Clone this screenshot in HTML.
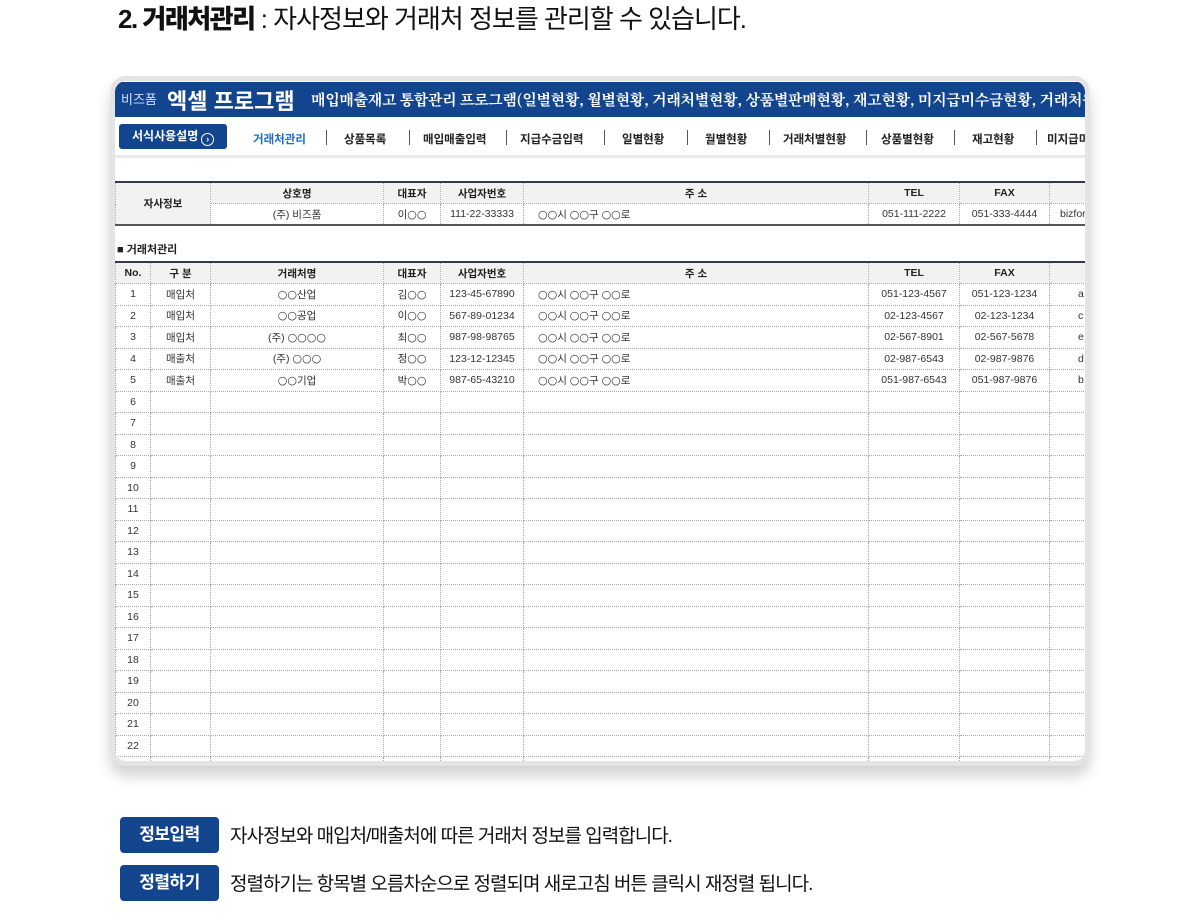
<!DOCTYPE html>
<html><head><meta charset="utf-8"><style>
*{margin:0;padding:0;box-sizing:border-box}
body{width:1200px;height:920px;background:#fff;font-family:"Liberation Sans","Noto Sans CJK KR",sans-serif;position:relative;overflow:hidden;color:#222}
.title{position:absolute;left:118px;top:-1px;font-size:26px;letter-spacing:-1px;color:#111;white-space:nowrap}
.title b{font-weight:900;letter-spacing:-1.5px}
.card{position:absolute;left:110px;top:76px;width:980px;height:690px;border:5px solid #e4e4e4;border-radius:16px;overflow:hidden;background:#fff;box-shadow:0 10px 14px rgba(0,0,0,.18)}
.hdr{position:absolute;left:0;top:1px;width:975px;height:35px;background:#13458f;color:#fff;white-space:nowrap}
.hdr .l{position:absolute;left:6px;top:7px;font-size:13px;color:#cfe0ff}
.hdr .b{position:absolute;left:52px;top:2px;font-size:22px;font-weight:bold}
.hdr .s{position:absolute;left:196px;top:7px;font-size:15px;font-family:"Noto Serif CJK SC","Noto Sans CJK KR",sans-serif;font-weight:bold;letter-spacing:-.3px}
.nav{position:absolute;left:0;top:38px;width:975px;height:39px;border-bottom:3px solid #eaeaea;white-space:nowrap}
.btn{position:absolute;left:4px;top:5px;width:108px;height:25px;background:#13458f;border-radius:3px;color:#fff;font-size:12px;font-weight:bold;line-height:25px;padding-left:13px}
.btn span{display:inline-block;width:13px;height:13px;border:1.5px solid #fff;border-radius:50%;font-size:9px;line-height:10px;text-align:center;vertical-align:-2px;margin-left:3px}
.nav .it{position:absolute;top:12px;font-size:11.5px;font-weight:bold;color:#222}
.nav .sep{position:absolute;top:11px;width:1px;height:15px;background:#555}
table{position:absolute;left:0;border-collapse:collapse;font-size:10.5px;table-layout:fixed}
td{border:1px dotted #aaa;text-align:center;height:21.5px;white-space:nowrap;overflow:hidden;color:#333}
.o{font-family:"DejaVu Sans",sans-serif;font-size:11px}
tr.h td{background:#f2f2f2;font-weight:bold;color:#222}
table.t{border-top:2px solid #333a4a;border-bottom:2px solid #555}
.sec{position:absolute;left:2px;top:160px;font-size:11px;font-weight:bold}
.badge{position:absolute;left:120px;width:99px;height:36px;background:#13458f;color:#fff;border-radius:4px;font-size:17px;font-weight:bold;text-align:center;line-height:36px;letter-spacing:-.5px}
.desc{position:absolute;left:230px;font-size:19px;letter-spacing:-1px;color:#111;white-space:nowrap}
</style></head><body>
<div class="title"><b>2. 거래처관리</b> : 자사정보와 거래처 정보를 관리할 수 있습니다.</div>
<div class="card">
 <div class="hdr"><span class="l">비즈폼</span><span class="b">엑셀 프로그램</span><span class="s">매입매출재고 통합관리 프로그램(일별현황, 월별현황, 거래처별현황, 상품별판매현황, 재고현황, 미지급미수금현황, 거래처원장</span></div>
 <div class="nav"><div class="btn">서식사용설명<span>›</span></div>
  <span class="it" style="left:138px;color:#1a6fc0">거래처관리</span><span class="sep" style="left:211px"></span>
  <span class="it" style="left:229px">상품목록</span><span class="sep" style="left:294px"></span>
  <span class="it" style="left:308px">매입매출입력</span><span class="sep" style="left:391px"></span>
  <span class="it" style="left:405px">지급수금입력</span><span class="sep" style="left:489px"></span>
  <span class="it" style="left:507px">일별현황</span><span class="sep" style="left:572px"></span>
  <span class="it" style="left:590px">월별현황</span><span class="sep" style="left:654px"></span>
  <span class="it" style="left:668px">거래처별현황</span><span class="sep" style="left:751px"></span>
  <span class="it" style="left:766px">상품별현황</span><span class="sep" style="left:839px"></span>
  <span class="it" style="left:857px">재고현황</span><span class="sep" style="left:921px"></span>
  <span class="it" style="left:932px">미지급미</span></div>
 <table class="t" style="top:100px;width:1010px">
  <colgroup><col style="width:95px"><col style="width:173px"><col style="width:57px"><col style="width:83px"><col style="width:345px"><col style="width:91px"><col style="width:90px"><col style="width:76px"></colgroup>
  <tr class="h"><td rowspan="2" style="background:#f2f2f2">자사정보</td><td>상호명</td><td>대표자</td><td>사업자번호</td><td>주 소</td><td>TEL</td><td>FAX</td><td></td></tr>
  <tr><td>(주) 비즈폼</td><td>이<span class="o">○○</span></td><td>111-22-33333</td><td style="text-align:left;padding-left:14px"><span class="o">○○</span>시 <span class="o">○○</span>구 <span class="o">○○</span>로</td><td>051-111-2222</td><td>051-333-4444</td><td style="text-align:left;padding-left:10px">bizform</td></tr>
 </table>
 <div class="sec">■ 거래처관리</div>
 <table class="t" style="top:180px;width:1010px;border-bottom:none">
  <colgroup><col style="width:35px"><col style="width:60px"><col style="width:173px"><col style="width:57px"><col style="width:83px"><col style="width:345px"><col style="width:91px"><col style="width:90px"><col style="width:76px"></colgroup>
  <tr class="h"><td>No.</td><td>구 분</td><td>거래처명</td><td>대표자</td><td>사업자번호</td><td>주 소</td><td>TEL</td><td>FAX</td><td></td></tr>
  <tr><td>1</td><td>매입처</td><td><span class="o">○○</span>산업</td><td>김<span class="o">○○</span></td><td>123-45-67890</td><td style="text-align:left;padding-left:14px"><span class="o">○○</span>시 <span class="o">○○</span>구 <span class="o">○○</span>로</td><td>051-123-4567</td><td>051-123-1234</td><td style="text-align:left;padding-left:28px">a</td></tr>
  <tr><td>2</td><td>매입처</td><td><span class="o">○○</span>공업</td><td>이<span class="o">○○</span></td><td>567-89-01234</td><td style="text-align:left;padding-left:14px"><span class="o">○○</span>시 <span class="o">○○</span>구 <span class="o">○○</span>로</td><td>02-123-4567</td><td>02-123-1234</td><td style="text-align:left;padding-left:28px">c</td></tr>
  <tr><td>3</td><td>매입처</td><td>(주) <span class="o">○○○○</span></td><td>최<span class="o">○○</span></td><td>987-98-98765</td><td style="text-align:left;padding-left:14px"><span class="o">○○</span>시 <span class="o">○○</span>구 <span class="o">○○</span>로</td><td>02-567-8901</td><td>02-567-5678</td><td style="text-align:left;padding-left:28px">e</td></tr>
  <tr><td>4</td><td>매출처</td><td>(주) <span class="o">○○○</span></td><td>정<span class="o">○○</span></td><td>123-12-12345</td><td style="text-align:left;padding-left:14px"><span class="o">○○</span>시 <span class="o">○○</span>구 <span class="o">○○</span>로</td><td>02-987-6543</td><td>02-987-9876</td><td style="text-align:left;padding-left:28px">d</td></tr>
  <tr><td>5</td><td>매출처</td><td><span class="o">○○</span>기업</td><td>박<span class="o">○○</span></td><td>987-65-43210</td><td style="text-align:left;padding-left:14px"><span class="o">○○</span>시 <span class="o">○○</span>구 <span class="o">○○</span>로</td><td>051-987-6543</td><td>051-987-9876</td><td style="text-align:left;padding-left:28px">b</td></tr>
  <tr><td>6</td><td></td><td></td><td></td><td></td><td></td><td></td><td></td><td></td></tr>
  <tr><td>7</td><td></td><td></td><td></td><td></td><td></td><td></td><td></td><td></td></tr>
  <tr><td>8</td><td></td><td></td><td></td><td></td><td></td><td></td><td></td><td></td></tr>
  <tr><td>9</td><td></td><td></td><td></td><td></td><td></td><td></td><td></td><td></td></tr>
  <tr><td>10</td><td></td><td></td><td></td><td></td><td></td><td></td><td></td><td></td></tr>
  <tr><td>11</td><td></td><td></td><td></td><td></td><td></td><td></td><td></td><td></td></tr>
  <tr><td>12</td><td></td><td></td><td></td><td></td><td></td><td></td><td></td><td></td></tr>
  <tr><td>13</td><td></td><td></td><td></td><td></td><td></td><td></td><td></td><td></td></tr>
  <tr><td>14</td><td></td><td></td><td></td><td></td><td></td><td></td><td></td><td></td></tr>
  <tr><td>15</td><td></td><td></td><td></td><td></td><td></td><td></td><td></td><td></td></tr>
  <tr><td>16</td><td></td><td></td><td></td><td></td><td></td><td></td><td></td><td></td></tr>
  <tr><td>17</td><td></td><td></td><td></td><td></td><td></td><td></td><td></td><td></td></tr>
  <tr><td>18</td><td></td><td></td><td></td><td></td><td></td><td></td><td></td><td></td></tr>
  <tr><td>19</td><td></td><td></td><td></td><td></td><td></td><td></td><td></td><td></td></tr>
  <tr><td>20</td><td></td><td></td><td></td><td></td><td></td><td></td><td></td><td></td></tr>
  <tr><td>21</td><td></td><td></td><td></td><td></td><td></td><td></td><td></td><td></td></tr>
  <tr><td>22</td><td></td><td></td><td></td><td></td><td></td><td></td><td></td><td></td></tr>
  <tr><td></td><td></td><td></td><td></td><td></td><td></td><td></td><td></td><td></td></tr>
 </table>
</div>
<div class="badge" style="top:817px">정보입력</div>
<div class="desc" style="top:821px">자사정보와 매입처/매출처에 따른 거래처 정보를 입력합니다.</div>
<div class="badge" style="top:865px">정렬하기</div>
<div class="desc" style="top:869px">정렬하기는 항목별 오름차순으로 정렬되며 새로고침 버튼 클릭시 재정렬 됩니다.</div>
</body></html>
